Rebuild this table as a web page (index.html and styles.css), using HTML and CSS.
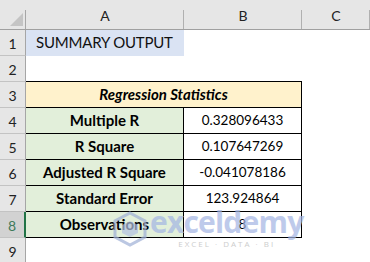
FILE: index.html
```html
<!DOCTYPE html>
<html>
<head>
<meta charset="utf-8">
<link rel="stylesheet" href="styles.css">
</head>
<body>
<div class="sheet">
  <div class="corner"><svg width="14" height="14" viewBox="0 0 14 14"><polygon points="0,13 13,13 13,0" fill="#c4c4c4"/></svg></div>
  <div class="colhead">A</div>
  <div class="colhead">B</div>
  <div class="colhead">C</div>

  <div class="rowhead">1</div>
  <div class="cell title">SUMMARY OUTPUT</div>
  <div class="cell"></div>
  <div class="cell"></div>

  <div class="rowhead">2</div>
  <div class="cell top-edge"></div>
  <div class="cell top-edge"></div>
  <div class="cell"></div>

  <div class="rowhead">3</div>
  <div class="cell box heading">Regression Statistics</div>
  <div class="cell"></div>

  <div class="rowhead">4</div>
  <div class="cell box label">Multiple R</div>
  <div class="cell box value">0.328096433</div>
  <div class="cell"></div>

  <div class="rowhead">5</div>
  <div class="cell box label">R Square</div>
  <div class="cell box value">0.107647269</div>
  <div class="cell"></div>

  <div class="rowhead">6</div>
  <div class="cell box label">Adjusted R Square</div>
  <div class="cell box value">-0.041078186</div>
  <div class="cell"></div>

  <div class="rowhead">7</div>
  <div class="cell box label">Standard Error</div>
  <div class="cell box value">123.924864</div>
  <div class="cell"></div>

  <div class="rowhead selected">8</div>
  <div class="cell box label">Observations</div>
  <div class="cell box value">8</div>
  <div class="cell"></div>

  <div class="rowhead">9</div>
  <div class="cell"></div>
  <div class="cell"></div>
  <div class="cell"></div>

  <div class="watermark">
    <svg class="wm-logo" width="34" height="36" viewBox="0 0 34 36">
      <polygon points="17,2 32,10 32,26 17,34 2,26 2,10" fill="none" stroke="#9fb0d6" stroke-width="3"/>
      <polygon points="17,10 25,14 25,22 17,26 9,22 9,14" fill="#b4c2e2"/>
    </svg>
    <div class="wm-text">
      <div class="wm-name">exceldemy</div>
      <div class="wm-sub">EXCEL · DATA · BI</div>
    </div>
  </div>
</div>
</body>
</html>
```

FILE: styles.css
```css
html, body {
  margin: 0;
  padding: 0;
  background: #ffffff;
  overflow: hidden;
}

.sheet {
  position: relative;
  width: 370px;
  height: 262px;
  display: grid;
  grid-template-columns: 26px 158px 118px 1fr;
  grid-template-rows: 30px repeat(9, 26px);
  font-family: Lato, "Liberation Sans", sans-serif;
  color: #000;
}

.sheet > div {
  box-sizing: border-box;
}

.corner {
  background: linear-gradient(#a6a6a6, #a6a6a6) right bottom / 1px 19px no-repeat, #e6e6e6;
  border-bottom: 1px solid #a0a0a0;
  display: flex;
  align-items: flex-end;
  justify-content: flex-end;
  padding: 0 2px 2px 0;
}

.corner svg {
  display: block;
}

.colhead {
  background: linear-gradient(#b0b0b0, #b0b0b0) right bottom / 1px 19px no-repeat, #e6e6e6;
  border-bottom: 1px solid #a0a0a0;
  display: flex;
  align-items: center;
  justify-content: center;
  padding-top: 2px;
  font-size: 14px;
  color: #222;
}

.rowhead {
  background: #e6e6e6;
  border-right: 1px solid #a6a6a6;
  border-bottom: 1px solid #c3c3c3;
  display: flex;
  align-items: flex-end;
  justify-content: center;
  padding-bottom: 3px;
  font-size: 14px;
  color: #222;
}

.rowhead.selected {
  background: #d2d2d2;
  border-right: 2px solid #217346;
  color: #3f7a5a;
}

.cell {
  display: flex;
  align-items: flex-end;
  padding-bottom: 4px;
  white-space: nowrap;
}

.title {
  background: #dae3f3;
  font-size: 15px;
  letter-spacing: -0.2px;
  padding-left: 10px;
  padding-bottom: 5px;
  color: #111;
}

.top-edge {
  border-bottom: 1px solid #000;
}

.box {
  border-right: 1px solid #000;
  border-bottom: 1px solid #000;
  justify-content: center;
}

.heading {
  grid-column: span 2;
  background: #fff2cc;
  font-weight: bold;
  font-style: italic;
  font-size: 15px;
}

.label {
  background: #e2efda;
  font-weight: bold;
  font-size: 15px;
}

.value {
  font-size: 13.5px;
  padding-bottom: 5px;
}

.watermark {
  position: absolute;
  left: 113px;
  top: 207px;
  display: flex;
  align-items: flex-start;
  gap: 3px;
  opacity: 0.7;
  pointer-events: none;
}

.wm-logo {
  margin-top: 4px;
}

.wm-text {
  display: flex;
  flex-direction: column;
  align-items: center;
}

.wm-name {
  font-family: "Open Sans", sans-serif;
  font-weight: bold;
  font-size: 30px;
  line-height: 30px;
  letter-spacing: -0.8px;
  color: #a3b5e3;
}

.wm-sub {
  font-family: "Open Sans", sans-serif;
  font-size: 8px;
  letter-spacing: 2px;
  color: #b8b8b8;
  margin-top: 1px;
}
```
